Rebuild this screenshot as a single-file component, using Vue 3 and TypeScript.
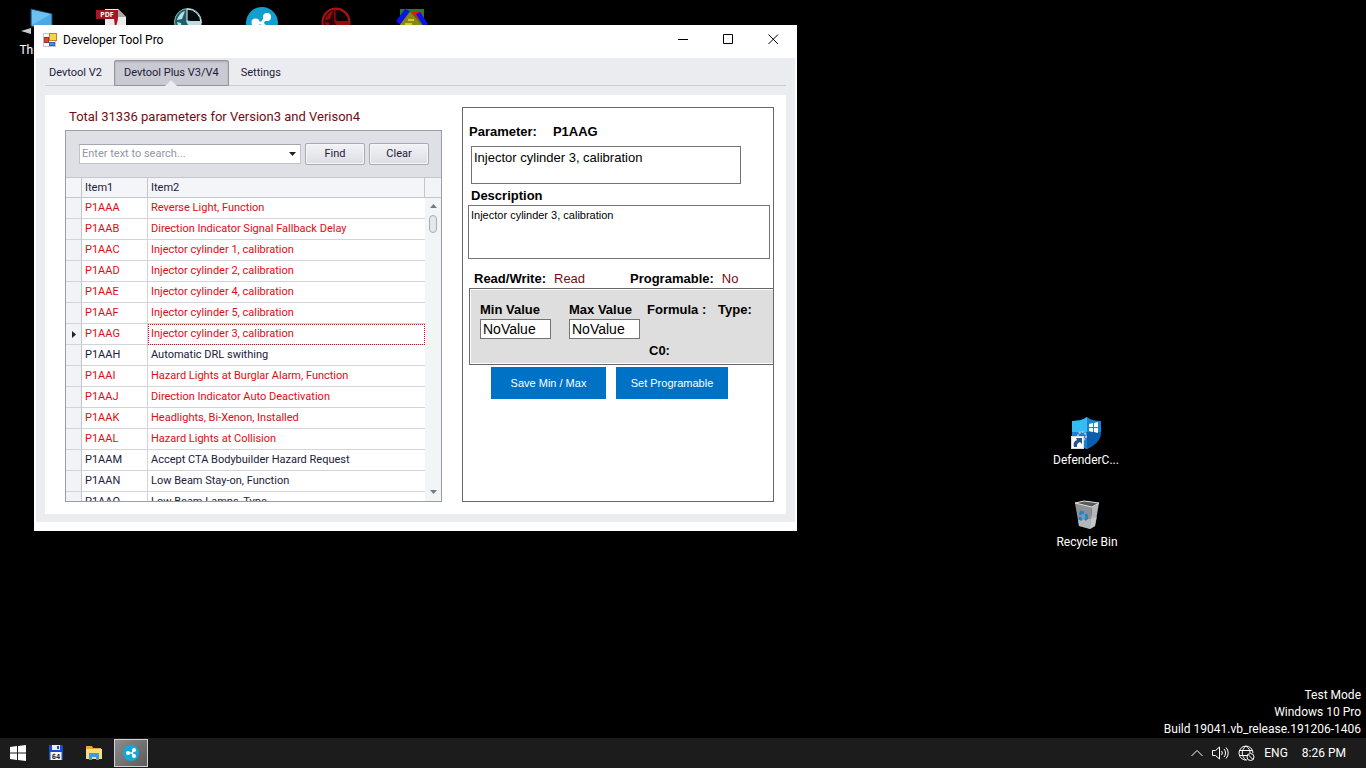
<script setup lang="ts">
import { ref } from 'vue'

interface ParameterRow {
  code: string
  name: string
  locked?: boolean
}

const tabs: string[] = ['Devtool V2', 'Devtool Plus V3/V4', 'Settings']
const activeTab = ref(1)
const search = ref('')
const selected = ref('P1AAG')
const shortText = ref('Injector cylinder 3, calibration')
const description = ref('Injector cylinder 3, calibration')
const minValue = ref('NoValue')
const maxValue = ref('NoValue')

const rows: ParameterRow[] = [
  { code: 'P1AAA', name: 'Reverse Light, Function', locked: true },
  { code: 'P1AAB', name: 'Direction Indicator Signal Fallback Delay', locked: true },
  { code: 'P1AAC', name: 'Injector cylinder 1, calibration', locked: true },
  { code: 'P1AAD', name: 'Injector cylinder 2, calibration', locked: true },
  { code: 'P1AAE', name: 'Injector cylinder 4, calibration', locked: true },
  { code: 'P1AAF', name: 'Injector cylinder 5, calibration', locked: true },
  { code: 'P1AAG', name: 'Injector cylinder 3, calibration', locked: true },
  { code: 'P1AAH', name: 'Automatic DRL swithing' },
  { code: 'P1AAI', name: 'Hazard Lights at Burglar Alarm, Function', locked: true },
  { code: 'P1AAJ', name: 'Direction Indicator Auto Deactivation', locked: true },
  { code: 'P1AAK', name: 'Headlights, Bi-Xenon, Installed', locked: true },
  { code: 'P1AAL', name: 'Hazard Lights at Collision', locked: true },
  { code: 'P1AAM', name: 'Accept CTA Bodybuilder Hazard Request' },
  { code: 'P1AAN', name: 'Low Beam Stay-on, Function' },
  { code: 'P1AAO', name: 'Low Beam Lamps, Type' },
]
</script>

<template>
  <div class="desktop">
    <div class="shortcut pc">
      <svg width="40" height="34" viewBox="0 0 40 34" aria-hidden="true">
        <path d="M11 1 32 6v18l-21-6z" fill="#48a9e6" stroke="#2b4a5e" />
        <path d="M12 2 31 6 12 17z" fill="#6dc0f2" />
        <path d="m1 23 10-3v6z" fill="#c9ccd0" />
      </svg>
      <span>This PC</span>
    </div>
    <div class="shortcut pdf">
      <svg width="32" height="32" viewBox="0 0 32 32" aria-hidden="true">
        <path d="M10 0h13l8 8v24H10z" fill="#ececec" />
        <path d="m23 0 8 8h-8z" fill="#a9a9a9" />
        <path d="M19 10h4l-2 8h-1z" fill="#b3131f" />
        <rect x="1" y="1" width="22" height="9" fill="#a81622" />
        <text x="12" y="8" text-anchor="middle" class="pdf-text">PDF</text>
      </svg>
    </div>
    <div v-for="kind in ['teal', 'red']" :key="kind" :class="['shortcut', 'wheel', kind]">
      <svg width="30" height="30" viewBox="0 0 30 30" aria-hidden="true">
        <circle cx="15" cy="15" r="13.500" class="disc" />
        <path d="M12 4C8 5 5 9 4 13l5-1z" class="shine" />
        <path d="M14 2v12l14 2A14 14 0 0 0 14 2z" class="hole" />
        <path d="M13 14h15v4H15z" class="shine" />
        <path d="m4 15 4 1 1 6-4-3z" class="shine" />
      </svg>
    </div>
    <div class="shortcut hub">
      <svg width="32" height="32" viewBox="0 0 32 32" aria-hidden="true">
        <circle cx="16" cy="16" r="16" fill="#139fce" />
        <g fill="#fff" stroke="#fff" stroke-width="3">
          <path d="M10 16h6l4-6M16 16l5 6" fill="none" />
          <circle cx="21" cy="10" r="2.500" /><circle cx="9.500" cy="15.500" r="2.500" /><circle cx="21" cy="22" r="2.500" />
        </g>
      </svg>
    </div>
    <div class="shortcut chip">
      <svg width="32" height="30" viewBox="0 0 32 30" aria-hidden="true">
        <path d="M4 0h24v20H4z" fill="#23802a" />
        <path d="M15 3h11v11z" fill="#ee1111" />
        <path d="m9 0 5 2L4 16 0 12z" fill="#0a12f0" />
        <path d="m20 5 4-2 8 12-4 3z" fill="#0a12f0" />
        <path d="M14 3 27 17 15 29 3 17z" fill="#8a8712" />
        <path d="M12 11h6M9 15h7" stroke="#e6e23a" stroke-width="1.500" />
      </svg>
    </div>

    <section class="window">
      <header class="titlebar">
        <svg class="app-icon" width="14" height="14" viewBox="0 0 14 14" aria-hidden="true">
          <rect x=".5" y=".5" width="12" height="13" fill="#fff" stroke="#c4c4c4" />
          <rect x="6.500" y=".5" width="7" height="7" fill="#fbd04c" stroke="#b98a1d" />
          <rect x="1.500" y="4.500" width="4" height="5" fill="#d9483b" stroke="#a72e23" />
          <rect x="6.500" y="9.500" width="5" height="3" fill="#5687df" stroke="#3561b5" />
        </svg>
        <h1>Developer Tool Pro</h1>
        <div class="caption-buttons">
          <button type="button" aria-label="Minimize">
            <svg width="11" height="11" viewBox="0 0 11 11"><path d="M0 5.500h10" stroke="#000" /></svg>
          </button>
          <button type="button" aria-label="Maximize">
            <svg width="11" height="11" viewBox="0 0 11 11"><path d="M.5.5h9v9h-9z" fill="none" stroke="#000" /></svg>
          </button>
          <button type="button" aria-label="Close">
            <svg width="11" height="11" viewBox="0 0 11 11"><path d="m.5.5 9.500 9.500M10 .5.5 10" stroke="#000" /></svg>
          </button>
        </div>
      </header>

      <div class="client">
        <nav class="tabs" role="tablist">
          <button
            v-for="(tab, i) in tabs"
            :key="tab"
            type="button"
            role="tab"
            :aria-selected="i === activeTab"
            :class="{ active: i === activeTab }"
            @click="activeTab = i"
          >
            {{ tab }}
            <svg v-if="i === activeTab" class="notch" width="12" height="6" viewBox="0 0 12 6" aria-hidden="true">
              <path d="M0 6 6 0l6 6z" fill="#ebecef" />
            </svg>
          </button>
        </nav>

        <main class="page">
          <section class="list">
            <h2>Total 31336 parameters for Version3 and Verison4</h2>
            <div class="grid">
              <form class="finder" @submit.prevent>
                <div class="combo">
                  <input v-model="search" type="text" aria-label="Search" placeholder="Enter text to search..." />
                  <button type="button" aria-label="Search history">
                    <svg width="7" height="4" viewBox="0 0 7 4"><path d="M0 0h7L3.500 4z" fill="#222" /></svg>
                  </button>
                </div>
                <button type="submit" class="push">Find</button>
                <button type="button" class="push" @click="search = ''">Clear</button>
              </form>
              <div class="rows">
                <table>
                  <thead>
                    <tr>
                      <th class="mark"></th>
                      <th class="code">Item1</th>
                      <th>Item2</th>
                    </tr>
                  </thead>
                  <tbody>
                    <tr v-for="row in rows" :key="row.code" :class="{ locked: row.locked, current: row.code === selected }" @click="selected = row.code">
                      <td class="mark">
                        <svg v-if="row.code === selected" width="4" height="7" viewBox="0 0 4 7"><path d="M0 0 4 3.500 0 7z" fill="#222" /></svg>
                      </td>
                      <td>{{ row.code }}</td>
                      <td class="name">{{ row.name }}</td>
                    </tr>
                  </tbody>
                </table>
                <div class="scroll" aria-hidden="true">
                  <div class="corner"></div>
                  <svg width="7" height="4" viewBox="0 0 7 4"><path d="M0 4h7L3.500 0z" fill="#777a82" /></svg>
                  <div class="thumb"></div>
                  <svg class="down" width="7" height="4" viewBox="0 0 7 4"><path d="M0 0h7L3.500 4z" fill="#777a82" /></svg>
                </div>
              </div>
            </div>
          </section>

          <section class="detail">
            <div class="heading">
              <label for="short">Parameter:</label>
              <strong>{{ selected }}</strong>
            </div>
            <textarea id="short" v-model="shortText" class="short"></textarea>
            <label for="long" class="long-label">Description</label>
            <textarea id="long" v-model="description" class="long"></textarea>
            <div class="access">
              <span><strong>Read/Write:</strong>Read</span>
              <span><strong>Programable:</strong>No</span>
            </div>
            <div class="values">
              <label for="min">Min Value</label>
              <label for="max">Max Value</label>
              <strong>Formula :</strong>
              <strong>Type:</strong>
              <input id="min" v-model="minValue" type="text" />
              <input id="max" v-model="maxValue" type="text" />
              <strong class="c0">C0:</strong>
            </div>
            <div class="actions">
              <button type="button" class="save">Save Min / Max</button>
              <button type="button" class="set">Set Programable</button>
            </div>
          </section>
        </main>
      </div>
    </section>

    <div class="shortcut defender">
      <svg width="34" height="34" viewBox="0 0 34 34" aria-hidden="true">
        <path d="M18 1c4 3 9 4 14 4v11c0 8-6 13-14 17C9 29 3 24 3 16V5c6 0 11-1 15-4z" fill="#1685d4" />
        <path d="M18 1v32C9 29 3 24 3 16V5c6 0 11-1 15-4z" fill="#35bdf3" />
        <path d="M3 16h15v17C9 29 3 24 3 16z" fill="#1b7fd0" />
        <path d="M18 16h14c0 8-6 13-14 17z" fill="#0d5eae" />
        <path d="m20 8 4-1v4h-4zm5-1 4-1v5h-4zm-5 5h4v4l-4-1zm5 0h4v5l-4-1z" fill="#fff" />
        <circle cx="13" cy="20" r="4" fill="none" stroke="#9bcdf0" stroke-width="2" stroke-dasharray="2 1" />
        <rect x="2.500" y="20.500" width="12" height="12" fill="#fff" stroke="#ddd" />
        <path d="M5 31c-1-5 1-6 3-7l-1-2h6v6l-2-2c-3 1-3 3-3 5z" fill="#225493" />
      </svg>
      <span>DefenderC...</span>
    </div>
    <div class="shortcut bin">
      <svg width="28" height="30" viewBox="0 0 28 30" aria-hidden="true">
        <path d="m2 3 17 4-2 22-11-3z" fill="#8f9294" />
        <path d="m19 7 7-4-4 23-5 3z" fill="#b5b8ba" />
        <path d="m2 3 9-2 15 2-7 4z" fill="#57595b" stroke="#e2e2e2" />
        <path d="m5 20 12-1 7-2-2 9-5 3-11-3z" fill="#d0d1d2" opacity=".6" />
        <path d="m7 15 1-3 3 1M13 14l1 4-2 2M9 20l-2-1v-2" fill="none" stroke="#1386dc" stroke-width="2.500" />
      </svg>
      <span>Recycle Bin</span>
    </div>

    <div class="watermark">
      <div>Test Mode</div>
      <div>Windows 10 Pro</div>
      <div>Build 19041.vb_release.191206-1406</div>
    </div>

    <footer class="taskbar">
      <button type="button" aria-label="Start">
        <svg width="16" height="16" viewBox="0 0 16 16"><path d="m0 2 7-1v6.500H0zm8-1 8-1v7.500H8zM0 8.500h7V15l-7-1zm8 0h8V16l-8-1z" fill="#fff" /></svg>
      </button>
      <button type="button" aria-label="File manager">
        <svg width="16" height="16" viewBox="0 0 16 16">
          <path d="M1 0h13l1 1v14H1z" fill="#1b4cc4" />
          <path d="M4 0h8v5H4z" fill="#e9eefb" /><path d="M9 1h2v3H9z" fill="#1b4cc4" />
          <path d="M2.500 7h11v8h-11z" fill="#f4f4f4" />
          <text x="8" y="14" text-anchor="middle" class="disk-text">64</text>
        </svg>
      </button>
      <button type="button" aria-label="File Explorer">
        <svg width="16" height="14" viewBox="0 0 16 14">
          <path d="M0 0h6l1 2h8v11H0z" fill="#e9a93a" /><path d="M0 3h16v10H0z" fill="#fbdc80" />
          <path d="M3 14V7h10v7h-3v-3H6v3z" fill="#3d9be0" />
        </svg>
      </button>
      <button type="button" class="running" aria-label="Developer Tool Pro">
        <svg width="16" height="16" viewBox="0 0 16 16">
          <circle cx="8" cy="8" r="8" fill="#11a9dd" />
          <path d="M5 8h4l2-3M9 8l2 3" stroke="#fff" stroke-width="1.500" fill="none" />
          <g fill="#fff"><circle cx="11" cy="5" r="2" /><circle cx="5" cy="8" r="2" /><circle cx="11" cy="11" r="2" /></g>
        </svg>
      </button>
      <div class="tray">
        <svg width="12" height="8" viewBox="0 0 12 8" aria-hidden="true"><path d="m.5 7 5.500-5.500L11.500 7" fill="none" stroke="#fff" /></svg>
        <svg width="17" height="14" viewBox="0 0 17 14" aria-hidden="true">
          <path d="M.5 4.500h3l4-3.500v12l-4-3.500h-3zM9.500 5a3 3 0 0 1 0 4M12 3a6 6 0 0 1 0 8M14 1.500a8 8 0 0 1 0 11" fill="none" stroke="#fff" />
        </svg>
        <svg width="17" height="16" viewBox="0 0 17 16" aria-hidden="true">
          <g fill="none" stroke="#fff">
            <path d="M9 15a7 7 0 1 1 6-7M1 5.500h13M1 10.500h8M8 1C3 5 3 11 8 15M8 1c3 2 4 4 4 7" />
            <circle cx="12.500" cy="12" r="3.500" /><path d="m10 9.500 5 5" />
          </g>
        </svg>
        <span>ENG</span>
        <time>8:26 PM</time>
      </div>
    </footer>
  </div>
</template>

<style>
body {
  margin: 0;
  background: #000;
}
</style>

<style scoped>
* {
  box-sizing: border-box;
}
.desktop {
  position: relative;
  display: flex;
  flex-direction: column;
  justify-content: flex-end;
  height: 100vh;
  overflow: hidden;
  background: #000;
  color: #fff;
  font: 12px/16px Roboto, "Noto Sans", sans-serif;
}
button {
  padding: 0;
  border: 0;
  background: none;
  color: inherit;
  font: inherit;
}
svg {
  display: block;
  flex: none;
}

/* Desktop shortcuts */
.shortcut {
  position: absolute;
  display: flex;
  flex-direction: column;
  align-items: center;
  width: 76px;
  text-align: center;
}
.pc { left: 2px; top: 8px; }
.pdf { left: 73px; top: 9px; }
.teal { left: 150px; top: 7px; }
.hub { left: 224px; top: 7px; }
.red { left: 298px; top: 7px; }
.chip { left: 374px; top: 9px; }
.defender { left: 1048px; top: 416px; gap: 2px; }
.bin { left: 1049px; top: 500px; gap: 4px; }
.pdf-text { font: bold 7px "Open Sans", sans-serif; fill: #fff; }
.teal .disc { fill: #17606c; stroke: #8db4bb; stroke-width: 1; }
.teal .hole { fill: #050c0e; stroke: #eef5f6; stroke-width: 1; }
.teal .shine { fill: #c3d9dd; }
.red .disc { fill: #2b0304; stroke: #a91216; stroke-width: 2; }
.red .hole { fill: #0c0101; stroke: #b31519; stroke-width: 1; }
.red .shine { fill: #96090d; }

/* Application window */
.window {
  position: absolute;
  left: 34px;
  top: 25px;
  width: 763px;
  padding: 0 2px 9px;
  background: #fff;
  color: #000;
}
.titlebar {
  display: flex;
  align-items: center;
  height: 33px;
  padding: 0 0 4px 7px;
}
.titlebar h1 {
  margin: 0 auto 0 6px;
  font: inherit;
}
.caption-buttons {
  display: flex;
  margin-right: -1px;
}
.caption-buttons button {
  display: grid;
  place-items: center;
  width: 45px;
  height: 29px;
}
.client {
  padding: 0 9px 8px;
  background: #ebecef;
  font: 11px/16px Roboto, "Noto Sans", sans-serif;
  color: #20203a;
}
.tabs {
  display: flex;
  height: 28px;
  margin-bottom: 9px;
  padding-top: 2px;
  border-bottom: 1px solid #c9cbd0;
}
.tabs button {
  position: relative;
  height: 26px;
  padding: 0 12px;
}
.tabs button:first-child {
  padding-left: 4px;
}
.tabs .active {
  padding: 0 9px;
  border: 1px solid #94959f;
  border-radius: 2px 2px 0 0;
  background: #c9cad2;
  box-shadow: inset 0 1px 2px #a7a8b1;
}
.notch {
  position: absolute;
  left: 50%;
  bottom: -1px;
  margin-left: -6px;
}
.page {
  display: grid;
  grid-template-columns: 377px 312px;
  gap: 20px;
  padding: 12px 12px 12px 20px;
  background: #fff;
}
.list {
  display: flex;
  flex-direction: column;
}
.list h2 {
  margin: 0 0 3px 4px;
  font: 13px/20px Roboto, sans-serif;
  color: #700d12;
}
.grid {
  height: 372px;
  overflow: hidden;
  border: 1px solid #9b9ca6;
  background: #fff;
}
.finder {
  display: flex;
  align-items: center;
  gap: 4px;
  height: 47px;
  padding: 0 12px 0 13px;
  border-bottom: 1px solid #c4c6cf;
  background: #dfe0e6;
}
.combo {
  display: flex;
  flex: 1;
  height: 20px;
  border: 1px solid #c1c2cb;
  border-top-color: #a5a6b0;
  background: #fff;
}
.combo input {
  flex: 1;
  min-width: 0;
  padding: 0 2px;
  border: 0;
  outline: 0;
  background: none;
  font: inherit;
  color: inherit;
}
.combo input::placeholder {
  color: #9496a3;
}
.combo button {
  display: grid;
  place-items: center;
  width: 15px;
}
.push {
  width: 60px;
  height: 22px;
  border: 1px solid #a7a9b4;
  border-radius: 2px;
  background: linear-gradient(#f3f3f6, #dcdde4);
  box-shadow: inset 0 0 0 1px #f6f6f8;
}
.rows {
  display: flex;
  align-items: flex-start;
}
table {
  flex: none;
  border-collapse: separate;
  border-spacing: 0;
  table-layout: fixed;
  width: 359px;
}
th,
td {
  height: 21px;
  padding: 0 3px;
  border-right: 1px solid #d3d4da;
  border-bottom: 1px solid #d3d4da;
  font-weight: normal;
  text-align: left;
  white-space: nowrap;
}
th {
  height: 20px;
  border-color: #c4c6cf;
  background: #f4f5f8;
}
th.mark {
  width: 16px;
}
th.code {
  width: 66px;
}
td.mark {
  padding-left: 6px;
  border-right-color: #c4c6cf;
  background: #f2f3f6;
}
td:last-child {
  border-right: 0;
}
.locked {
  color: #e00b14;
}
.current .name {
  outline: 1px dotted #c8141c;
  outline-offset: -1px;
}
.scroll {
  display: flex;
  flex-direction: column;
  align-items: center;
  width: 16px;
  height: 323px;
  background: #f3f4f6;
}
.corner {
  width: 100%;
  height: 20px;
  margin-bottom: 6px;
  border-bottom: 1px solid #c4c6cf;
}
.thumb {
  width: 8px;
  height: 18px;
  margin-top: 7px;
  border: 1px solid #a9abb5;
  border-radius: 4px;
  background: #e6e7eb;
}
.down {
  margin-top: auto;
  margin-bottom: 7px;
}

/* Parameter details */
.detail {
  display: flex;
  flex-direction: column;
  align-items: flex-start;
  padding: 16px 0 0 5px;
  border: 1px solid #67676b;
  font: 13px/16px "Liberation Sans", Arial, sans-serif;
  color: #000;
  overflow: hidden;
}
.detail label,
.detail strong {
  font-weight: bold;
}
.heading {
  display: flex;
  gap: 16px;
  padding-left: 1px;
}
textarea {
  display: block;
  padding: 3px 2px;
  border: 1px solid #737377;
  border-radius: 0;
  background: #fff;
  color: #000;
  font: inherit;
  resize: none;
  overflow: hidden;
}
.short {
  width: 270px;
  height: 38px;
  margin: 6px 0 4px 3px;
}
.long-label {
  margin-left: 3px;
}
.long {
  width: 302px;
  height: 54px;
  margin-top: 1px;
  padding: 1px 2px;
  font-size: 11px;
}
.access {
  display: grid;
  grid-template-columns: 156px auto;
  margin: 12px 0 1px 6px;
  color: #750d12;
}
.access span {
  display: flex;
  gap: 8px;
}
.access strong {
  color: #000;
}
.values {
  display: grid;
  grid-template-columns: 89px 78px 71px auto;
  grid-template-rows: 17px 20px 25px;
  align-self: stretch;
  margin-left: 1px;
  padding: 13px 0 0 10px;
  border: 1px solid #67676b;
  border-right: 0;
  background: #dedede;
  box-shadow: inset 1px 1px #fff, inset 0 -1px #fff;
}
.values input {
  width: 71px;
  height: 20px;
  padding: 0 2px;
  border: 1px solid #737377;
  background: #fff;
  color: #000;
  font-family: inherit;
  font-size: 14px;
}
.values .c0 {
  grid-area: 3 / 3;
  padding: 4px 0 0 2px;
}
.actions {
  display: flex;
  gap: 10px;
  margin: 2px 0 0 23px;
}
.actions button {
  height: 32px;
  background: #0072c6;
  color: #fff;
  font-size: 11px;
}
.save { width: 115px; }
.set { width: 112px; }

/* Watermark and taskbar */
.watermark {
  align-self: flex-end;
  padding-right: 5px;
  text-align: right;
  line-height: 17px;
}
.taskbar {
  display: flex;
  align-items: stretch;
  height: 30px;
  background: #1c1c1c;
}
.taskbar button {
  display: grid;
  place-items: center;
  width: 38px;
  padding-right: 2px;
}
.taskbar .running {
  width: 34px;
  height: 28px;
  margin-top: 1px;
  padding: 0;
  border: 1px solid #d2d2d2;
  background: linear-gradient(135deg, #8c8c8c, #5c5c5c);
}
.disk-text { font: bold 7px "DejaVu Sans Mono", monospace; fill: #222; }
.tray {
  display: flex;
  align-items: center;
  gap: 9px;
  margin-left: auto;
  padding-right: 20px;
}
.tray time {
  margin-left: 5px;
}
</style>
